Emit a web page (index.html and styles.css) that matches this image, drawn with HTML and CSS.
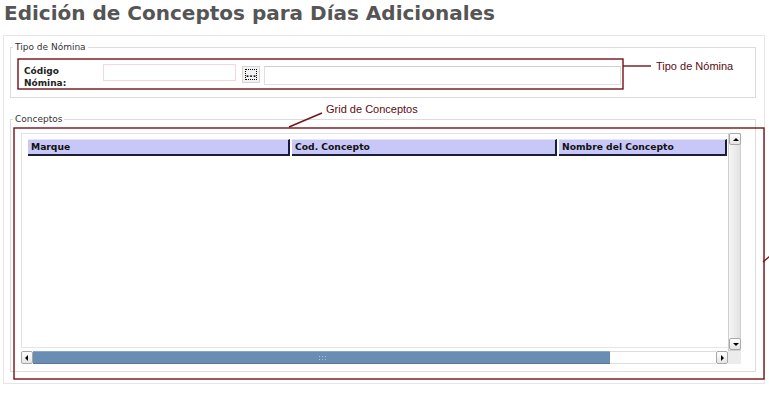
FILE: index.html
```html
<!DOCTYPE html>
<html lang="es">
  <head>
    <meta charset="UTF-8" />
    <title>Edición de Conceptos para Días Adicionales</title>
    <link rel="stylesheet" href="styles.css">
  </head>
  <body>
    <h1 class="title">Edición de Conceptos para Días Adicionales</h1>
    <div class="panel">
      <!-- tipo de nomina -->
      <fieldset class="group tipo">
        <legend>Tipo de Nómina</legend>
        <div class="row">
          <label class="lbl">Código<br />Nómina:</label>
          <input class="code" type="text" />
          <button class="pick">...</button>
          <input class="name" type="text" />
        </div>
      </fieldset>
      <!-- conceptos -->
      <fieldset class="group conceptos">
        <legend>Conceptos</legend>
        <div class="grid">
          <div class="grid-main">
            <div class="view">
              <div class="head">
                <div class="col c1">Marque</div>
                <div class="col c2">Cod. Concepto</div>
                <div class="col c3">Nombre del Concepto</div>
              </div>
            </div>
            <div class="vscroll">
              <div class="btn up"></div>
              <div class="btn down"></div>
            </div>
          </div>
          <div class="grid-foot">
            <div class="hscroll">
              <div class="btn left"></div>
              <div class="thumb"><span class="grip"></span></div>
              <div class="track"></div>
              <div class="btn right"></div>
            </div>
            <div class="corner"></div>
          </div>
        </div>
      </fieldset>
    </div>

    <!-- notas -->
    <svg class="marks" width="769" height="393" viewBox="0 0 769 393">
      <rect x="18" y="59" width="605" height="30" />
      <line x1="623" y1="66" x2="651" y2="66" />
      <rect x="14" y="128" width="750" height="251" />
      <line x1="289" y1="127" x2="322" y2="113" />
      <line x1="763" y1="262" x2="770" y2="256" />
    </svg>
    <div class="note n1">Tipo de Nómina</div>
    <div class="note n2">Grid de Conceptos</div>
  </body>
</html>
```

FILE: styles.css
```css
* {
  margin: 0;
  padding: 0;
  box-sizing: border-box;
}
body {
  position: relative;
  width: 769px;
  height: 393px;
  overflow: hidden;
  background-color: #fff;
  font-family: "DejaVu Sans", Verdana, sans-serif;
  font-size: 9px;
  color: #333;
}
.title {
  height: 35px;
  padding: 0 0 0 4px;
  font-size: 20px;
  line-height: 26px;
  font-weight: bold;
  color: #555;
}
.panel {
  width: 762px;
  height: 349px;
  margin-left: 3px;
  padding: 5px 0 0 6px;
  border: 1px solid #e6e6e6;
}
.group {
  width: 746px;
  border: 1px solid #dcdcdc;
}
.group > legend {
  margin-left: 2px;
  padding: 0 2px;
  line-height: 12px;
  color: #333;
}
/* tipo */
.tipo {
  padding: 11px 10px 9px 0;
}
.row {
  display: flex;
  align-items: flex-start;
  height: 24px;
  margin-left: 13px;
}
.lbl {
  width: 79px;
  margin-top: 1px;
  font-weight: bold;
  line-height: 12px;
  color: #222;
}
.code {
  width: 133px;
  height: 17px;
  border: 1px solid #f0d8de;
  background-color: #fff;
}
.pick {
  width: 18px;
  height: 17px;
  margin: 2px 0 0 6px;
  border: 1px solid #d4d4d4;
  background-color: #f2f2f2;
  font-family: "DejaVu Sans", sans-serif;
  font-size: 9px;
  font-weight: bold;
  line-height: 9px;
  color: #000;
  outline: 1px dotted #000;
  outline-offset: -4px;
}
.name {
  width: 357px;
  height: 19px;
  margin: 2px 0 0 4px;
  border: 1px solid #e0e0e0;
  border-top-color: #cfcfcf;
  background-color: #fff;
}
/* conceptos */
.conceptos {
  margin-top: 15px;
  padding: 8px 0 7px 10px;
}
.conceptos > legend {
  margin-left: -8px;
}
.grid {
  width: 720px;
  height: 231px;
}
.grid-main {
  display: flex;
  height: 218px;
}
.view {
  flex: 1;
  height: 215px;
  padding: 5px 0 0 6px;
  border-top: 1px solid #e2e2e2;
  border-left: 1px solid #e2e2e2;
  border-bottom: 1px solid #e6e6e6;
  overflow: hidden;
}
.head {
  display: flex;
  gap: 2px;
  height: 17px;
}
.col {
  height: 17px;
  padding-left: 3px;
  background-color: #c8c8f8;
  border-top: 1px solid #e4e4ff;
  border-right: 2px solid #1c1c3a;
  border-bottom: 2px solid #1c1c3a;
  font-size: 9.2px;
  font-weight: bold;
  line-height: 14px;
  color: #111;
}
.c1 {
  width: 262px;
}
.c2 {
  width: 265px;
}
.c3 {
  width: 168px;
}
.vscroll {
  display: flex;
  flex-direction: column;
  justify-content: space-between;
  width: 13px;
  height: 218px;
  border: 1px solid #d0d0d0;
  border-top: none;
  background: linear-gradient(to right, #f6f6f6, #e2e2e2);
}
.btn {
  position: relative;
  width: 12px;
  height: 12px;
  border: 1px solid #a8a8a8;
  border-radius: 2px;
  background: linear-gradient(#ffffff, #e4e4e4);
}
.btn::after {
  content: "";
  position: absolute;
  left: 3px;
  top: 3px;
  border: 3px solid transparent;
}
.up::after {
  top: 1px;
  border-bottom-color: #000;
}
.down::after {
  top: 4px;
  border-top-color: #000;
}
.left::after {
  left: 0;
  border-right-color: #000;
}
.right::after {
  left: 4px;
  border-left-color: #000;
}
.grid-foot {
  display: flex;
  height: 13px;
}
.hscroll {
  display: flex;
  width: 707px;
  height: 13px;
}
.hscroll .btn {
  width: 12px;
  height: 13px;
}
.thumb {
  display: flex;
  justify-content: center;
  align-items: center;
  width: 577px;
  height: 13px;
  background-color: #6a8db3;
  border-top: 1px solid #8aa6c4;
  border-bottom: 1px solid #587999;
}
.grip {
  width: 8px;
  height: 6px;
  background-image: radial-gradient(circle, #a8bfd8 40%, transparent 45%);
  background-size: 3px 3px;
}
.track {
  flex: 1;
  height: 13px;
  background-color: #fff;
  border-top: 1px solid #dcdcdc;
  border-bottom: 1px solid #dcdcdc;
}
.corner {
  width: 13px;
  height: 13px;
  background-color: #ececec;
}
/* notas */
.marks {
  position: absolute;
  left: 0;
  top: 0;
  fill: none;
  stroke: #74121a;
  stroke-width: 1.4;
}
.note {
  position: absolute;
  font-family: "Liberation Sans", Arial, sans-serif;
  font-size: 11px;
  line-height: 13px;
  color: #5a0c12;
}
.n1 {
  left: 656px;
  top: 60px;
}
.n2 {
  left: 326px;
  top: 103px;
}
```
